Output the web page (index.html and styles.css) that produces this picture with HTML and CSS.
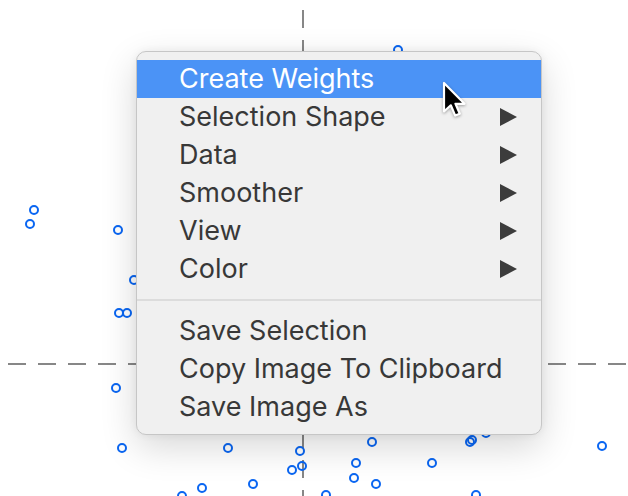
FILE: index.html
```html
<!DOCTYPE html>
<html>
<head>
<meta charset="utf-8">
<link rel="stylesheet" href="styles.css">
</head>
<body>
<div class="stage">
  <svg class="plot" width="628" height="496" viewBox="0 0 628 496">
    <line class="axis" x1="303" y1="10" x2="303" y2="496"/>
    <line class="axis" x1="8" y1="364" x2="628" y2="364"/>
    <g class="pts">
      <circle cx="398" cy="50" r="4"/>
      <circle cx="34" cy="210" r="4"/>
      <circle cx="30" cy="224" r="4"/>
      <circle cx="118" cy="230" r="4"/>
      <circle cx="134" cy="280" r="4"/>
      <circle cx="119" cy="313" r="4"/>
      <circle cx="127" cy="313" r="4"/>
      <circle cx="116" cy="388" r="4"/>
      <circle cx="122" cy="448" r="4"/>
      <circle cx="228" cy="448" r="4"/>
      <circle cx="300" cy="451" r="4"/>
      <circle cx="302" cy="466" r="4"/>
      <circle cx="292" cy="470" r="4"/>
      <circle cx="253" cy="484" r="4"/>
      <circle cx="202" cy="488" r="4"/>
      <circle cx="182" cy="496" r="4"/>
      <circle cx="372" cy="442" r="4"/>
      <circle cx="356" cy="463" r="4"/>
      <circle cx="354" cy="478" r="4"/>
      <circle cx="376" cy="484" r="4"/>
      <circle cx="432" cy="463" r="4"/>
      <circle cx="470" cy="442" r="4"/>
      <circle cx="472" cy="440" r="4"/>
      <circle cx="486" cy="433" r="4"/>
      <circle cx="602" cy="446" r="4"/>
      <circle cx="326" cy="495" r="4"/>
      <circle cx="476" cy="495" r="4"/>
    </g>
  </svg>

  <div class="menu">
    <div class="item active"><span class="label">Create Weights</span></div>
    <div class="item"><span class="label">Selection Shape</span><span class="arrow"></span></div>
    <div class="item"><span class="label">Data</span><span class="arrow"></span></div>
    <div class="item"><span class="label">Smoother</span><span class="arrow"></span></div>
    <div class="item"><span class="label">View</span><span class="arrow"></span></div>
    <div class="item"><span class="label">Color</span><span class="arrow"></span></div>
    <div class="sep"></div>
    <div class="item"><span class="label">Save Selection</span></div>
    <div class="item"><span class="label">Copy Image To Clipboard</span></div>
    <div class="item"><span class="label">Save Image As</span></div>
  </div>

  <svg class="cursor" width="30" height="42" viewBox="0 0 30 42">
    <path d="M3 2 L3 30.5 L9.8 24.3 L14.2 34.6 L18.8 32.7 L14.5 22.8 L23.5 22.8 Z" fill="#000" stroke="#fff" stroke-width="2.2" stroke-linejoin="round"/>
  </svg>
</div>
</body>
</html>
```

FILE: styles.css
```css
html, body {
  margin: 0;
  padding: 0;
  background: #ffffff;
}

.stage {
  position: relative;
  width: 628px;
  height: 496px;
  overflow: hidden;
  background: #ffffff;
  font-family: Inter, "Noto Sans", "Liberation Sans", sans-serif;
}

.plot {
  position: absolute;
  left: 0;
  top: 0;
}

.axis {
  stroke: #878787;
  stroke-width: 2;
  stroke-dasharray: 18 12;
}

.pts circle {
  fill: none;
  stroke: #0a66f2;
  stroke-width: 2;
}

.menu {
  position: absolute;
  left: 136px;
  top: 51px;
  width: 404px;
  padding: 8px 0 8px 0;
  background: #f0f0f0;
  border: 1px solid #c6c6c6;
  border-radius: 10px;
  box-shadow: 0 12px 36px rgba(0, 0, 0, 0.16), 0 0 8px rgba(0, 0, 0, 0.06);
}

.item {
  display: flex;
  align-items: center;
  justify-content: space-between;
  height: 38px;
  padding: 0 24px 0 42px;
  color: #383838;
  font-size: 27px;
  line-height: 38px;
}

.item.active {
  background: #4b93f6;
  color: #ffffff;
}

.label {
  white-space: nowrap;
}

.arrow {
  width: 0;
  height: 0;
  border-top: 9.5px solid transparent;
  border-bottom: 9.5px solid transparent;
  border-left: 17px solid #3c3c3c;
}

.sep {
  height: 2px;
  margin: 11px 0;
  background: #dcdcdc;
}

.cursor {
  position: absolute;
  left: 441px;
  top: 81px;
  filter: drop-shadow(0 1px 1.5px rgba(0, 0, 0, 0.35));
}
```
